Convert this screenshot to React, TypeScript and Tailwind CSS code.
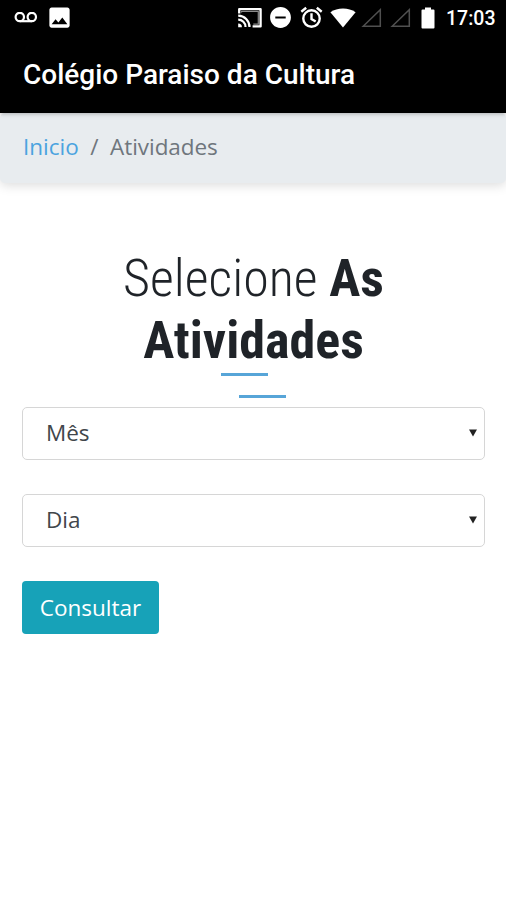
import { MdImage, MdRemoveCircle } from 'react-icons/md';

const FIELDS = [
  { id: 'mes', label: 'Mês' },
  { id: 'dia', label: 'Dia' },
];

function VoicemailIcon() {
  return (
    <svg viewBox="0 0 24 12" className="h-3 w-6 shrink-0" fill="none" stroke="currentColor" strokeWidth="2.2">
      <circle cx="5.8" cy="5" r="4.2" />
      <circle cx="17.8" cy="5" r="4.2" />
      <path d="M5.8 9.2h12" />
    </svg>
  );
}

function CastIcon({ className }: { className: string }) {
  return (
    <svg viewBox="0 0 26 22" className={`h-[22px] w-[26px] shrink-0 ${className}`} fill="none" stroke="currentColor">
      <path d="M2.2 6.500V2.200h21.400v17.200h-8" strokeWidth="2.300" strokeLinejoin="round" />
      <path d="M4.500 5.500V4.500h16.800v12.600h-5" stroke="#8a8a8a" strokeWidth="1.200" />
      <path d="M1.200 12.700a7.300 7.300 0 0 1 7.300 7.300M1.200 8.700a11.300 11.300 0 0 1 11.300 11.300" strokeWidth="2.200" />
      <path d="M1.200 16.500A3.700 3.700 0 0 1 4.900 20.200H1.200z" fill="currentColor" stroke="none" />
    </svg>
  );
}

function AlarmIcon({ className }: { className: string }) {
  return (
    <svg viewBox="0 0 24 24" className={`size-[25px] shrink-0 ${className}`} fill="none" stroke="currentColor" strokeWidth="2.3">
      <circle cx="12" cy="13" r="7.9" />
      <path d="M2.200 6.500 6.900 2.600M21.800 6.500 17.100 2.600M12 8v5.400l4 2.400" />
    </svg>
  );
}

function NoSignal({ className }: { className: string }) {
  return (
    <svg viewBox="0 0 21 20" className={`h-5 w-[21px] shrink-0 ${className}`} fill="none" stroke="#505050" strokeWidth="1.5">
      <path d="M2.200 18.200 19.300 1.700v16.500z" />
    </svg>
  );
}

function StatusBar() {
  return (
    <div className="flex h-9 items-center bg-black pl-[14px] text-white">
      <VoicemailIcon />
      <MdImage className="-mt-px ml-[8px] size-[27px] shrink-0" />
      <CastIcon className="ml-[164px]" />
      <MdRemoveCircle className="-mt-px ml-[5px] size-[25px] shrink-0" />
      <AlarmIcon className="-mt-px ml-[6px]" />
      <svg viewBox="0 0 26 20" className="ml-[6px] h-5 w-[26px] shrink-0" fill="currentColor">
        <path d="M13 19.500.4 4.200C4 1.500 8.300.4 13 .4s9 1.100 12.600 3.800z" />
      </svg>
      <NoSignal className="ml-[5px]" />
      <NoSignal className="ml-[8px]" />
      <svg viewBox="0 0 14 22" className="-mt-px ml-[10px] h-[22px] w-[14px] shrink-0" fill="currentColor">
        <path d="M4 .5h6v2h2.500q1 0 1 1v17q0 1-1 1h-11q-1 0-1-1v-17q0-1 1-1H4z" />
      </svg>
      <span className="ml-[11px] pt-px text-[19.5px] leading-none font-medium">17:03</span>
    </div>
  );
}

function SelectField({ id, label }: { id: string; label: string }) {
  return (
    <button
      id={id}
      type="button"
      className="flex h-[53px] w-full items-center justify-between rounded-[5px] border-[1.5px] border-[#d6d6d6] bg-white pr-[7px] pb-px pl-[23px] text-[#41464b]"
    >
      <span className="text-[22.5px]">{label}</span>
      <svg viewBox="0 0 8 8" className="size-2" fill="#222">
        <path d="M0 .5h8l-4 7z" />
      </svg>
    </button>
  );
}

export default function App() {
  return (
    <div className="h-[900px] w-full overflow-hidden bg-white font-['Open_Sans',sans-serif] font-[370]">
      <header className="relative h-[113px] bg-black font-['Roboto',sans-serif] text-white shadow-[0_1px_4px_rgba(0,0,0,0.25)]">
        <StatusBar />
        <div className="flex h-[77px] items-center pt-px pl-[23px]">
          <h1 className="text-[28px] font-medium">Colégio Paraiso da Cultura</h1>
        </div>
      </header>

      <nav className="flex h-[70px] items-center rounded-[5px] bg-[#e8ecef] pb-[3px] pl-[23px] text-[22.5px] shadow-[0_2px_12px_rgba(0,0,0,0.15)]">
        <a className="text-[#4ba3df]">Inicio</a>
        <span className="px-[11.5px] text-[#6f767d]">/</span>
        <span className="tracking-[-0.05px] text-[#6f767d]">Atividades</span>
      </nav>

      <main className="pt-[65px] pr-[21px] pl-[22px]">
        <h2 className="text-center font-['Roboto_Condensed','Roboto',sans-serif] text-[52px] leading-[62px] font-light text-[#1f2328] [font-stretch:75%]">
          Selecione <b className="font-bold">As</b>
          <br />
          <b className="font-bold">Atividades</b>
        </h2>
        <div className="mx-auto mt-[1px] flex h-[25px] w-[65px] flex-col justify-between">
          <span className="h-[3px] w-[47px] bg-[#57a5d8]" />
          <span className="h-[3px] w-[47px] self-end bg-[#57a5d8]" />
        </div>

        <form className="mt-[9px] flex flex-col items-start gap-[34px]">
          {FIELDS.map((field) => (
            <SelectField key={field.id} {...field} />
          ))}
          <button type="button" className="h-[53px] w-[137px] rounded-[4px] bg-[#17a2b8] text-[22.5px] text-white">
            Consultar
          </button>
        </form>
      </main>
    </div>
  );
}
